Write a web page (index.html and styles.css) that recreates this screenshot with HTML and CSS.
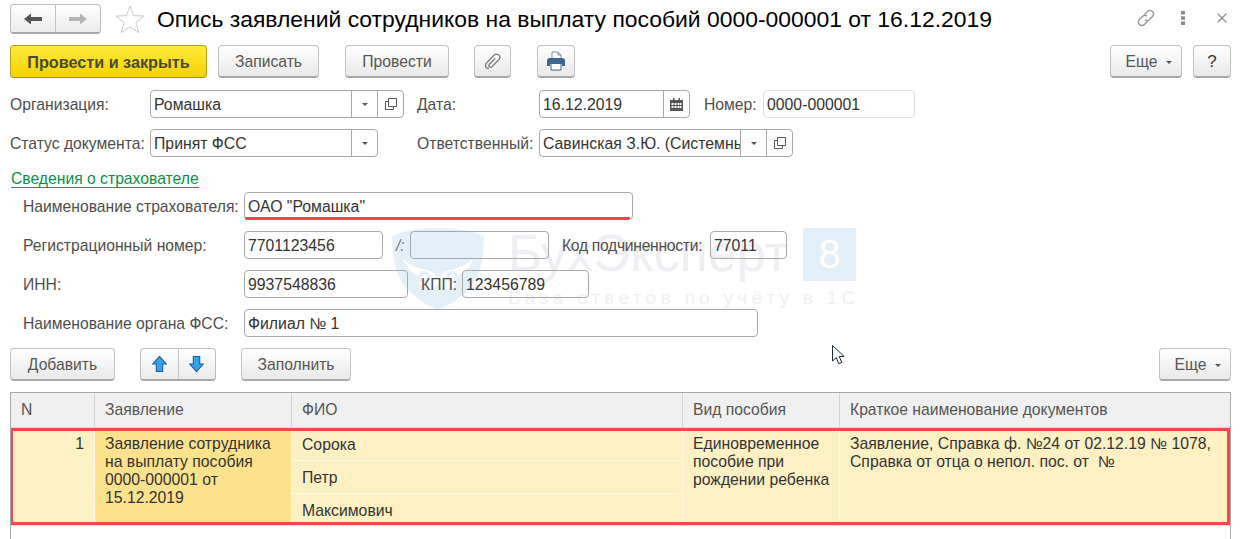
FILE: index.html
```html
<!DOCTYPE html>
<html lang="ru">
<head>
<meta charset="utf-8">
<title>Опись заявлений</title>
<link rel="stylesheet" href="styles.css">
</head>
<body>
<div class="watermark" aria-hidden="true">
  <svg class="wm-shield" viewBox="0 0 92 82" width="92" height="82">
    <path d="M0 8C14 2 30 0 46 0s32 2 46 8c0 28-6 44-17 55C66 72 56 78 46 82 36 78 26 72 17 63 6 52 0 36 0 8z" fill="#e4f0f8"/>
    <path d="M11 31c8 8 16 9 24 11 5 1 8 4 11 8 3-4 6-7 11-8 8-2 16-3 24-11-4 10-10 15-17 17 2 6-1 12-7 13-5 1-9-2-11-6-2 4-6 7-11 6-6-1-9-7-7-13-7-2-13-7-17-17z" fill="#fff"/>
    <circle cx="32" cy="49" r="6" fill="#e4f0f8"/><circle cx="60" cy="49" r="6" fill="#e4f0f8"/>
    <circle cx="32" cy="49" r="2.5" fill="#fff"/><circle cx="60" cy="49" r="2.5" fill="#fff"/>
  </svg>
  <div class="wm-text">
    <div class="wm-title">БухЭксперт</div>
    <div class="wm-sub">База ответов по учёту в 1С</div>
  </div>
  <div class="wm-eight">8</div>
</div>

<header class="head">
  <div class="nav">
    <div class="nav-btn">
      <svg viewBox="0 0 18 12" width="18" height="12"><path d="M0 6l7-5.5V4h11v4H7v3.500z" fill="#555"/></svg>
    </div>
    <div class="nav-btn">
      <svg viewBox="0 0 18 12" width="18" height="12"><path d="M18 6l-7-5.5V4H0v4h11v3.500z" fill="#b4b4b4"/></svg>
    </div>
  </div>
  <svg class="star" viewBox="0 0 30 28" width="30" height="28"><path d="M15 1l3.600 9.600 10.400.5-8.100 6.500 2.800 10L15 22l-8.700 5.600 2.800-10L1 11.100l10.400-.5z" fill="none" stroke="#c6cacf" stroke-width="1"/></svg>
  <h1 class="title">Опись заявлений сотрудников на выплату пособий 0000-000001 от 16.12.2019</h1>
  <div class="win-tools">
    <svg class="win-link" viewBox="0 0 20 20" width="20" height="20" fill="none" stroke="#9a9a9a" stroke-width="1.500"><path d="M8.500 6.500l3-3a3.500 3.500 0 0 1 5 5l-3 3a3.500 3.500 0 0 1-4.500.4"/><path d="M11.500 13.500l-3 3a3.500 3.500 0 0 1-5-5l3-3a3.500 3.500 0 0 1 4.500-.4"/></svg>
    <svg class="win-more" viewBox="0 0 4 14" width="4" height="14"><path d="M0 0h4v3.500H0zM0 5.250h4v3.500H0zM0 10.500h4V14H0z" fill="#8a8a8a"/></svg>
    <svg class="win-close" viewBox="0 0 10 10" width="10" height="10"><path d="M.7.7l8.600 8.600M9.300.7L.7 9.300" stroke="#8c8c8c" stroke-width="1.300"/></svg>
  </div>
</header>

<main class="form">
  <div class="toolbar">
    <div class="btn btn-primary w197">Провести и закрыть</div>
    <div class="btn w101 ml11">Записать</div>
    <div class="btn w104 ml26">Провести</div>
    <div class="btn w37 ml25">
      <svg viewBox="0 0 18 18" width="18" height="18" fill="none" stroke="#808080" stroke-width="1.400"><path d="M5 16.500c-2 0-3.500-1.500-3.500-3.300 0-1 .5-1.800 1.200-2.500l7.300-7.500c1.500-1.400 3.800-1.400 5 0 1.200 1.300 1 3.300-.3 4.600l-6.500 6.700c-.9.800-2.100.9-2.800.2-.7-.7-.6-1.900.2-2.700l5.600-5.800"/></svg>
    </div>
    <div class="btn w38 ml26">
      <svg viewBox="0 0 20 20" width="20" height="20"><path d="M6 1h6l3 3v5H6z" fill="#fff" stroke="#7a8ea6"/><path d="M12 1v3h3" fill="none" stroke="#7a8ea6"/><path d="M1 10c0-2 1-3 2.500-3h13C18 7 19 8 19 10v5h-3v-2H4v2H1z" fill="#3f648f"/><path d="M5 12.500h10V19H5z" fill="#fff" stroke="#3f648f"/></svg>
    </div>
    <div class="btn btn-more w72 push">Еще<span class="caret"></span></div>
    <div class="btn w38 ml11 btn-dark">?</div>
  </div>

  <div class="row row-first">
    <div class="label w140">Организация:</div>
    <div class="field w254">
      <div class="field-text">Ромашка</div>
      <div class="field-btn"><span class="caret"></span></div>
      <div class="field-btn">
        <svg viewBox="0 0 12 12" width="12" height="12" fill="none" stroke="#555"><path d="M3.500.5h8v8h-8z"/><path d="M3.500 3.500h-3v8h8v-3"/></svg>
      </div>
    </div>
    <div class="label w122 ml13">Дата:</div>
    <div class="field w151">
      <div class="field-text">16.12.2019</div>
      <div class="field-btn">
        <svg viewBox="0 0 13 13" width="13" height="13"><path d="M0 2h13v11H0z" fill="#555"/><path d="M3 0h1.500v3H3zM8.500 0H10v3H8.500z" fill="#555"/><path d="M1.500 5h2v2h-2zM4.500 5h2v2h-2zM7.500 5h2v2h-2zM10 5h1.500v2H10zM1.500 8h2v2h-2zM4.500 8h2v2h-2zM7.500 8h2v2h-2zM10 8h1.500v2H10z" fill="#fff"/></svg>
      </div>
    </div>
    <div class="label w59 ml14">Номер:</div>
    <div class="field field-light w152"><div class="field-text">0000-000001</div></div>
  </div>

  <div class="row">
    <div class="label w140">Статус документа:</div>
    <div class="field w228">
      <div class="field-text">Принят ФСС</div>
      <div class="field-btn"><span class="caret"></span></div>
    </div>
    <div class="label w122 ml39">Ответственный:</div>
    <div class="field w254">
      <div class="field-text">Савинская З.Ю. (Системный администратор)</div>
      <div class="field-btn"><span class="caret"></span></div>
      <div class="field-btn">
        <svg viewBox="0 0 12 12" width="12" height="12" fill="none" stroke="#555"><path d="M3.500.5h8v8h-8z"/><path d="M3.500 3.500h-3v8h8v-3"/></svg>
      </div>
    </div>
  </div>

  <div class="group-link"><a class="link">Сведения о страхователе</a></div>

  <div class="row sub">
    <div class="label w221">Наименование страхователя:</div>
    <div class="field w389 field-required"><div class="field-text">ОАО "Ромашка"</div></div>
  </div>
  <div class="row sub">
    <div class="label w221">Регистрационный номер:</div>
    <div class="field w139"><div class="field-text">7701123456</div></div>
    <div class="label w14 ml13 label-it">/:</div>
    <div class="field w139"><div class="field-text"></div></div>
    <div class="label label-tight w148 ml13">Код подчиненности:</div>
    <div class="field w77"><div class="field-text">77011</div></div>
  </div>
  <div class="row sub">
    <div class="label w221">ИНН:</div>
    <div class="field w164"><div class="field-text">9937548836</div></div>
    <div class="label w41 ml13">КПП:</div>
    <div class="field w127"><div class="field-text">123456789</div></div>
  </div>
  <div class="row sub">
    <div class="label w221">Наименование органа ФСС:</div>
    <div class="field w514"><div class="field-text">Филиал № 1</div></div>
  </div>

  <div class="toolbar">
    <div class="btn w105">Добавить</div>
    <div class="nav nav-arrows ml25">
      <div class="nav-btn">
        <svg viewBox="0 0 14 16" width="15" height="18"><path d="M7 .8L13.300 8H10v7H4V8H.7z" fill="#36a0e8" stroke="#17609a"/></svg>
      </div>
      <div class="nav-btn">
        <svg viewBox="0 0 14 16" width="15" height="18"><path d="M7 15.200L.7 8H4V1h6v7h3.300z" fill="#36a0e8" stroke="#17609a"/></svg>
      </div>
    </div>
    <div class="btn w110 ml25">Заполнить</div>
    <div class="btn btn-more w72 push">Еще<span class="caret"></span></div>
  </div>

  <section class="grid">
    <div class="grid-head">
      <div class="cell">N</div>
      <div class="cell">Заявление</div>
      <div class="cell">ФИО</div>
      <div class="cell">Вид пособия</div>
      <div class="cell">Краткое наименование документов</div>
    </div>
    <div class="grid-row">
      <div class="td td-num">1</div>
      <div class="td td-active">Заявление сотрудника на выплату пособия 0000-000001 от 15.12.2019</div>
      <div class="td td-stack">
        <div class="sub-cell">Сорока</div>
        <div class="sub-cell">Петр</div>
        <div class="sub-cell">Максимович</div>
      </div>
      <div class="td">Единовременное пособие при рождении ребенка</div>
      <div class="td">Заявление, Справка ф. №24 от 02.12.19 № 1078, Справка от отца о непол. пос. от &nbsp;№</div>
    </div>
  </section>
</main>

<svg class="cursor" viewBox="0 0 14 20" width="14" height="20" aria-hidden="true"><path d="M.5.5v15.500l3.800-3.300 2.500 6 3-1.300-2.600-5.900h5z" fill="#fff" stroke="#1f2a33"/></svg>
</body>
</html>
```

FILE: styles.css
```css
* { box-sizing: border-box; }
html, body { margin: 0; padding: 0; height: 100%; }
body {
  width: 1248px;
  height: 539px;
  overflow: hidden;
  position: relative;
  font-family: "Liberation Sans", Arial, sans-serif;
  font-size: 15.7px;
  color: #333;
  padding: 4px 17px 0 10px;
}

/* header */
.head { display: flex; align-items: center; height: 30px; }
.nav {
  display: flex;
  width: 91px;
  height: 30px;
  border: 1px solid #bdbdbd;
  border-bottom: 2px solid #a8a8a8;
  border-radius: 4px;
  background: linear-gradient(#ffffff, #ebebeb);
}
.nav-btn { flex: 1; display: flex; align-items: center; justify-content: center; }
.nav-btn + .nav-btn { border-left: 1px solid #c4c4c4; }
.star { margin-left: 14px; flex: none; }
.title {
  margin: 0 0 0 12px;
  font-size: 22.9px;
  font-weight: 400;
  color: #000;
  white-space: nowrap;
}
.win-tools { margin-left: auto; display: flex; align-items: center; }
.win-link { margin-right: 25px; margin-top: -2px; }
.win-more { margin-right: 32px; margin-top: -2px; }
.win-close { margin-right: 4px; margin-top: -2px; }

/* layout */
.form { display: flex; flex-direction: column; gap: 11px; margin-top: 11px; }
.toolbar { display: flex; height: 33px; flex: none; }
.row { display: flex; align-items: center; height: 28px; flex: none; }
.row-first { margin-top: 1px; }
.sub { padding-left: 13px; }
.group-link { height: 24px; margin-bottom: -12px; margin-top: 1px; line-height: 20px; padding-left: 1px; }
.link { color: #0b8f46; border-bottom: 1px solid #0b9a4c; display: inline-block; line-height: 17px; }

/* buttons */
.btn {
  display: flex;
  align-items: center;
  justify-content: center;
  flex: none;
  padding-top: 2px;
  border: 1px solid #c2c2c2;
  border-bottom: 2px solid #a8a8a8;
  border-radius: 4px;
  background: linear-gradient(#ffffff, #e9e9e9);
  color: #555;
}
.btn svg { margin-top: -2px; }
.btn-primary {
  background: linear-gradient(#ffea3c, #f4d300);
  border: 1px solid #b9a11c;
  border-bottom: 1px solid #a8911a;
  font-weight: 700;
  font-size: 16.2px;
  color: #4a4a3a;
}
.btn-dark { color: #333; font-size: 17px; }
.btn-more { padding-left: 6px; }
.caret {
  display: inline-block;
  width: 0;
  height: 0;
  border-left: 3px solid transparent;
  border-right: 3px solid transparent;
  border-top: 3px solid #555;
}
.btn-more .caret { margin-left: 9px; }
.nav-arrows { width: 76px; height: 33px; }
.push { margin-left: auto; }

/* fields */
.label { color: #4d4d4d; white-space: nowrap; flex: none; padding-top: 2px; }
.label-it { font-style: italic; color: #777; }
.label-tight { letter-spacing: -0.3px; }
.field {
  display: flex;
  flex: none;
  height: 28px;
  border: 1px solid #a8a8a8;
  border-radius: 4px;
  position: relative;
}
.field-light { border-color: #dcdcdc; }
.field-text {
  flex: 1;
  min-width: 0;
  padding: 1px 0 0 3px;
  font-size: 15.8px;
  line-height: 26px;
  white-space: nowrap;
  overflow: hidden;
  color: #333;
}
.field-btn {
  flex: none;
  width: 26px;
  display: flex;
  align-items: center;
  justify-content: center;
  border-left: 1px solid #a8a8a8;
}
.field-required::after {
  content: "";
  position: absolute;
  left: 0;
  right: 2px;
  bottom: -1px;
  height: 3px;
  background: #f4444a;
  border-radius: 0 0 2px 2px;
}

/* widths */
.w14 { width: 14px; } .w37 { width: 37px; } .w38 { width: 38px; } .w41 { width: 41px; }
.w59 { width: 59px; } .w72 { width: 72px; } .w77 { width: 77px; } .w101 { width: 101px; }
.w104 { width: 104px; } .w105 { width: 105px; } .w110 { width: 110px; } .w122 { width: 122px; }
.w127 { width: 127px; } .w139 { width: 139px; } .w140 { width: 140px; } .w148 { width: 148px; }
.w151 { width: 151px; } .w152 { width: 152px; } .w164 { width: 164px; } .w197 { width: 197px; }
.w221 { width: 221px; } .w228 { width: 228px; } .w254 { width: 254px; } .w389 { width: 389px; }
.w514 { width: 514px; }
.ml11 { margin-left: 11px; } .ml13 { margin-left: 13px; } .ml14 { margin-left: 14px; }
.ml25 { margin-left: 25px; } .ml26 { margin-left: 26px; } .ml39 { margin-left: 39px; }

/* table */
.grid {
  height: 160px;
  border: 1px solid #a9a9a9;
  border-bottom: 0;
}
.grid-head, .grid-row {
  display: grid;
  grid-template-columns: 84px 197px 391px 157px 1fr;
}
.grid-head {
  height: 35px;
  background: #f0f0f0;
  border-bottom: 1px solid #d8d8d8;
}
.cell {
  padding-left: 10px;
  line-height: 33px;
  color: #555;
  border-right: 1px solid #d4d4d4;
}
.cell:last-child { border-right: 0; }
.grid-row {
  position: relative;
  height: 98px;
  background: #fdf0c2;
  overflow: hidden;
  border-bottom: 1px solid #ddd;
  font-size: 15.75px;
}
.grid-row::after {
  content: "";
  position: absolute;
  inset: 0;
  border: 3px solid #f8444a;
  border-left-width: 2px;
  pointer-events: none;
}
.td {
  padding: 7px 4px 0 10px;
  line-height: 18px;
  color: #333;
  border-right: 1px solid #fff9e6;
}
.td:last-child { border-right: 0; }
.td-num { text-align: right; padding-right: 10px; }
.td-active { background: #fde28d; }
.td-stack { padding: 0; }
.sub-cell {
  height: 33px;
  padding-left: 10px;
  line-height: 33px;
  border-bottom: 1px solid #fff9e6;
}

/* overlays */
.watermark {
  position: absolute;
  left: 392px;
  top: 228px;
  z-index: -1;
  display: flex;
  align-items: flex-start;
}
.wm-text { margin-left: 24px; width: 295px; }
.wm-title { font-size: 52px; line-height: 50px; color: #eeeef3; white-space: nowrap; }
.wm-sub { margin-top: 9px; font-size: 19px; line-height: 22px; letter-spacing: 4.3px; color: #f0f0f4; white-space: nowrap; }
.wm-eight {
  width: 53px;
  height: 53px;
  background: #e3eff8;
  color: #fff;
  font-size: 40px;
  line-height: 53px;
  text-align: center;
}
.cursor { position: absolute; left: 832px; top: 345px; }
```
